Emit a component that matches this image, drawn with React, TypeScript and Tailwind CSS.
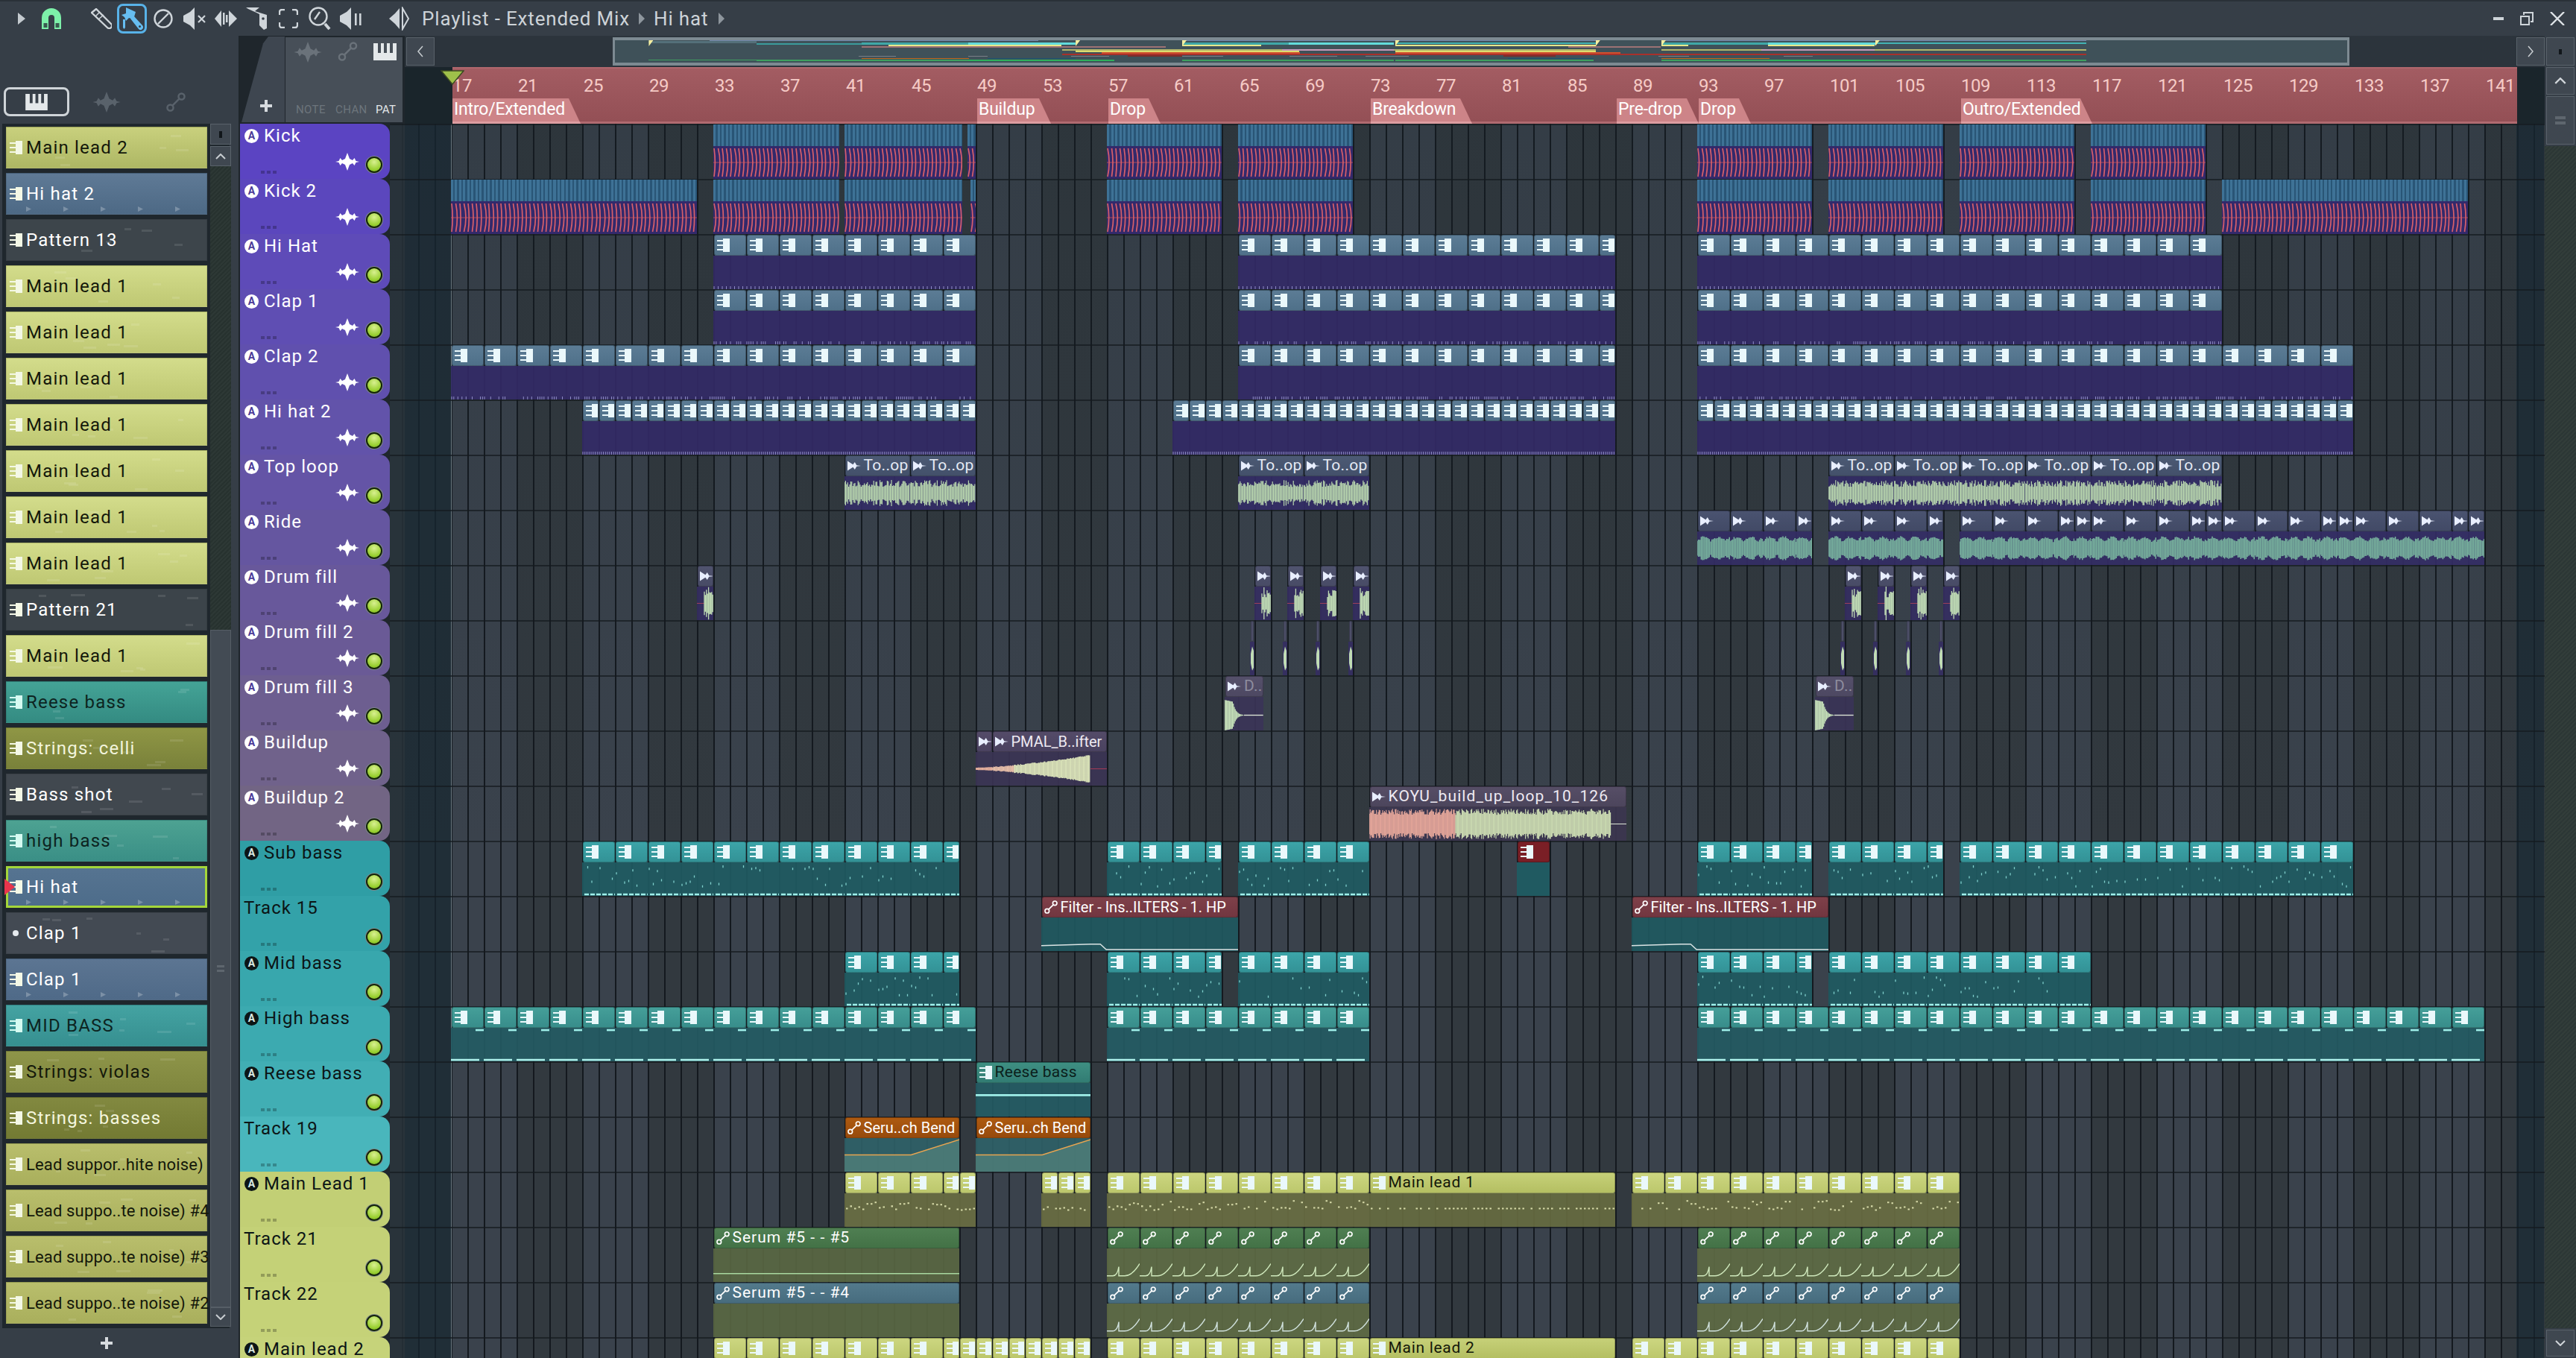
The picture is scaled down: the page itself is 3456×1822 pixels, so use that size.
import React from 'react';

const BAR = 22;
const ORIGIN = 82; // canvas x of bar 17

// small seeded random so the waveforms stay the same each render
function rng(seed: number) {
  let s = seed * 9301 + 49297;
  return () => {
    s = (s * 9301 + 49297) % 233280;
    return s / 233280;
  };
}

function PatIcon({ className = 'text-[#eaf8fb]' }: { className?: string }) {
  return (
    <svg viewBox="0 0 18 18" className={`w-[18px] h-[18px] shrink-0 ${className}`}>
      <path fill="currentColor" d="M9 0H18V18H9V16H1V14H9V10H1V8H9V4H1V2H9Z" />
    </svg>
  );
}

function AudioIcon({ className = 'text-[#e8eeff]' }: { className?: string }) {
  return (
    <svg viewBox="0 0 22 16" className={`w-[18px] h-[14px] shrink-0 ${className}`}>
      <path fill="currentColor" d="M0 0L9 6L12 2L15 7L22 8L15 9L12 14L9 10L0 16Z" />
    </svg>
  );
}

function AutoIcon({ color = 'white', className = 'w-[18px] h-[18px]' }: { color?: string; className?: string }) {
  return (
    <svg viewBox="0 0 18 18" className={`shrink-0 ${className}`} fill="none" stroke={color} strokeWidth="1.7">
      <circle cx="3.8" cy="14.2" r="2.8" />
      <circle cx="14.2" cy="3.8" r="2.8" />
      <path d="M5.8 12.2L12.2 5.8" />
    </svg>
  );
}

function WaveIcon({ color = 'white', className = 'w-[32px] h-[24px]' }: { color?: string; className?: string }) {
  return (
    <svg viewBox="0 0 32 24" className={`shrink-0 ${className}`}>
      <path fill={color} d="M16 0L19 8L23 10L25.500 7L27.500 11L32 12L27.500 13L25.500 17L23 14L19 16L16 24L13 16L9 14L6.500 17L4.500 13L0 12L4.500 11L6.500 7L9 10L13 8Z" />
    </svg>
  );
}

function PianoIcon({ bg = '#e4e8ea', keys = '#39414a', className = 'w-[31px] h-[23px]' }: { bg?: string; keys?: string; className?: string }) {
  return (
    <svg viewBox="0 0 31 23" className={`shrink-0 ${className}`}>
      <rect width="31" height="23" fill={bg} />
      <rect x="6" y="0" width="4" height="13" fill={keys} />
      <rect x="14" y="0" width="4" height="13" fill={keys} />
      <rect x="22" y="0" width="4" height="13" fill={keys} />
    </svg>
  );
}

function Led() {
  return (
    <div className="w-[24px] h-[24px] rounded-full bg-[#7e878a] p-[1px]">
      <div className="w-full h-full rounded-full bg-[#14240a] p-[2px]">
        <div className="w-full h-full rounded-full bg-[radial-gradient(circle_at_50%_30%,#d8f090,#9ad032_65%,#6da51c)]" />
      </div>
    </div>
  );
}

function ToolIcons() {
  const c = '#cfd5da';
  return (
    <div className="flex items-center h-[48px] pl-[24px] shrink-0">
      <svg viewBox="0 0 10 16" className="w-[10px] h-[16px]"><path fill="#c4cacf" d="M0 0L10 8L0 16Z" /></svg>
      <svg viewBox="0 0 26 28" className="w-[26px] h-[28px] ml-[22px]">
        <path fill="#7df0a9" d="M0 28V13A13 13 0 0 1 26 13V28H17V13A4 4 0 0 0 9 13V28Z" />
        <rect x="2.500" y="20" width="5" height="6" fill="#3a5a50" />
        <rect x="18.500" y="20" width="5" height="6" fill="#3a5a50" />
      </svg>
      <svg viewBox="0 0 28 28" className="w-[28px] h-[28px] ml-[40px]" fill="none" stroke={c} strokeWidth="2.400">
        <path d="M1 6L7 1L27 21A3.500 3.500 0 0 1 22 26L2 7Z" />
        <path d="M6 11L12 5M10 15L17 9" strokeWidth="1.500" />
      </svg>
      <div className="w-[40px] h-[40px] ml-[7px] rounded-[8px] border-[3px] border-[#58b2e8] flex items-center justify-center">
        <svg viewBox="0 0 30 32" className="w-[30px] h-[32px]">
          <path fill="#66bdf0" d="M7 1L20 7L17 17L11 15L7 19L5 14L1 11L7 9Z" />
          <path fill="#66bdf0" d="M13 16L18 13L29 25A3.500 3.500 0 0 1 24 30Z" />
          <circle cx="25.500" cy="26.500" r="1.500" fill="#343c45" />
          <path fill="#66bdf0" d="M3 17H6V28L4.500 30L3 28Z" />
        </svg>
      </div>
      <svg viewBox="0 0 26 26" className="w-[26px] h-[26px] ml-[9px]" fill="none" stroke={c} strokeWidth="2.400">
        <circle cx="13" cy="13" r="11.500" />
        <path d="M6 20L20 6" />
      </svg>
      <svg viewBox="0 0 30 30" className="w-[30px] h-[30px] ml-[14px]">
        <path fill={c} d="M0 11L9 6L15 0V30L9 24L0 19Z" />
        <path stroke={c} strokeWidth="2.200" d="M20 11L29 20M29 11L20 20" />
      </svg>
      <svg viewBox="0 0 30 26" className="w-[30px] h-[26px] ml-[12px]">
        <path fill={c} d="M0 13L9 2V24Z" />
        <path fill={c} d="M30 13L19 2V24Z" />
        <rect x="11" y="5" width="2.500" height="16" fill={c} />
        <rect x="15" y="8" width="2.500" height="10" fill={c} />
      </svg>
      <svg viewBox="0 0 30 30" className="w-[30px] h-[30px] ml-[12px]">
        <path fill={c} d="M0 0H18L12 5L28 10V28L24 30L18 24V9L14 7L3 2Z" />
        <circle cx="23" cy="15" r="1.800" fill="#343c45" />
      </svg>
      <svg viewBox="0 0 26 26" className="w-[26px] h-[26px] ml-[14px]" fill="none" stroke={c} strokeWidth="2.400">
        <path d="M8 1H4A3 3 0 0 0 1 4V8M18 1H22A3 3 0 0 1 25 4V8M8 25H4A3 3 0 0 1 1 22V18M18 25H22A3 3 0 0 0 25 22V18" />
      </svg>
      <svg viewBox="0 0 30 32" className="w-[30px] h-[32px] ml-[14px]" fill="none" stroke={c} strokeWidth="2.400">
        <circle cx="13" cy="13" r="11.500" />
        <path d="M8 17L15 7" />
        <path d="M22 23L28 30" strokeWidth="4" />
      </svg>
      <svg viewBox="0 0 30 30" className="w-[30px] h-[30px] ml-[12px]">
        <path fill={c} d="M0 11L9 6L15 0V30L9 24L0 19Z" />
        <rect x="20" y="8" width="2.600" height="16" fill={c} />
        <rect x="26" y="8" width="2.600" height="16" fill={c} />
      </svg>
      <svg viewBox="0 0 30 32" className="w-[30px] h-[32px] ml-[36px]">
        <path fill={c} d="M0 16L8 9L14 2V30L8 23Z" />
        <path fill="none" stroke={c} strokeWidth="2" d="M18 2V30L26 16Z" />
      </svg>
    </div>
  );
}

function TitleBar() {
  return (
    <div className="flex items-center h-[48px] shrink-0 bg-[#363e47] border-t-2 border-[#2a3138]">
      <ToolIcons />
      <div className="ml-[14px] flex items-center text-[#cdd3d8] text-[26px] tracking-[0.85px] whitespace-nowrap">
        <span>Playlist - Extended Mix</span>
        <svg viewBox="0 0 8 16" className="w-[8px] h-[18px] mx-[12px]"><path fill="#8e969d" d="M0 0L8 8L0 16Z" /></svg>
        <span>Hi hat</span>
        <svg viewBox="0 0 8 16" className="w-[8px] h-[18px] ml-[14px]"><path fill="#8e969d" d="M0 0L8 8L0 16Z" /></svg>
      </div>
      <div className="ml-auto flex items-center gap-[22px] pr-[15px]">
        <div className="w-[14px] h-[4px] bg-[#ced4d9]" />
        <svg viewBox="0 0 18 18" className="w-[18px] h-[18px]" fill="none" stroke="#ced4d9" strokeWidth="2">
          <rect x="1" y="6" width="11" height="11" />
          <path d="M5 4V1H17V13H14" />
        </svg>
        <svg viewBox="0 0 20 18" className="w-[20px] h-[18px]" fill="none" stroke="#dde2e6" strokeWidth="2.400">
          <path d="M1 0L19 18M19 0L1 18" />
        </svg>
      </div>
    </div>
  );
}

type SideItem = { name: string; box: string; text: string; icon?: string };

const L1 = { box: 'bg-[linear-gradient(#d3dc8b,#bfc873)]', text: 'text-[#14180a]' };
const LS = { box: 'bg-[linear-gradient(#b9be6c,#a9af5c)]', text: 'text-[#14180a]' };
const SIDE: SideItem[] = [
  { name: 'Main lead 2', box: 'bg-[linear-gradient(#c9d07d,#aeb764)]', text: 'text-[#14180a]' },
  { name: 'Hi hat 2', box: 'bg-[linear-gradient(#5f7a96,#4d6985)]', text: 'text-white' },
  { name: 'Pattern 13', box: 'bg-[#3d454b]', text: 'text-white' },
  { name: 'Main lead 1', ...L1 },
  { name: 'Main lead 1', ...L1 },
  { name: 'Main lead 1', ...L1 },
  { name: 'Main lead 1', ...L1 },
  { name: 'Main lead 1', ...L1 },
  { name: 'Main lead 1', ...L1 },
  { name: 'Main lead 1', ...L1 },
  { name: 'Pattern 21', box: 'bg-[#3c444a]', text: 'text-white' },
  { name: 'Main lead 1', ...L1 },
  { name: 'Reese bass', box: 'bg-[linear-gradient(#44a396,#348b82)]', text: 'text-[#0d2421]' },
  { name: 'Strings: celli', box: 'bg-[linear-gradient(#8f9645,#79813a)]', text: 'text-[#f2f4dc]' },
  { name: 'Bass shot', box: 'bg-[#41484f]', text: 'text-white' },
  { name: 'high bass', box: 'bg-[linear-gradient(#4da292,#3a8f86)]', text: 'text-[#0d2421]' },
  { name: 'Hi hat', box: 'bg-[linear-gradient(#567491,#4d6c8a)] outline-[3px] outline-[#a4d63a] -outline-offset-[3px]', text: 'text-white' },
  { name: 'Clap 1', box: 'bg-[#434a53]', text: 'text-white', icon: 'dot' },
  { name: 'Clap 1', box: 'bg-[linear-gradient(#5c7592,#4f6a88)]', text: 'text-white' },
  { name: 'MID BASS', box: 'bg-[linear-gradient(#44a3a2,#368f90)]', text: 'text-[#0d2421]' },
  { name: 'Strings: violas', box: 'bg-[linear-gradient(#8e9549,#7f863e)]', text: 'text-[#14180a]' },
  { name: 'Strings: basses', box: 'bg-[linear-gradient(#828940,#737a33)]', text: 'text-[#f4f6de]' },
  { name: 'Lead suppor..hite noise)', ...LS },
  { name: 'Lead suppo..te noise) #4', ...LS },
  { name: 'Lead suppo..te noise) #3', ...LS },
  { name: 'Lead suppo..te noise) #2', ...LS },
];

// faint preview notes behind a pattern's name
function SideMarks({ it, seed }: { it: SideItem; seed: number }) {
  const r = rng(seed);
  const blue = it.name.startsWith('Hi hat') || (it.name === 'Clap 1' && it.icon !== 'dot');
  const marks = Array.from({ length: blue ? 5 : 6 }, (_, i) => ({
    left: blue ? 26 + i * 50 : 40 + r() * 210,
    top: blue ? 44 : 6 + r() * 44,
    width: blue ? 7 : 6 + r() * 14,
  }));
  return (
    <>
      {marks.map((m, i) => (
        <div
          key={i}
          className={blue ? 'absolute h-[7px] bg-white/25 [clip-path:polygon(0_0,100%_50%,0_100%)]' : 'absolute h-[3px] bg-white/10'}
          style={{ left: m.left, top: m.top, width: m.width }}
        />
      ))}
    </>
  );
}

function Sidebar() {
  return (
    <div className="w-[322px] shrink-0 flex flex-col bg-[#363e47] border-r-2 border-[#1e252a]">
      <div className="h-[118px] shrink-0 flex items-end pb-[10px] pl-[5px]">
        <div className="w-[88px] h-[39px] rounded-[8px] border-[3px] border-[#cfd4d8] flex items-center justify-center">
          <PianoIcon className="w-[32px] h-[22px]" />
        </div>
        <WaveIcon color="#59626b" className="w-[42px] h-[28px] ml-[29px] mb-[5px]" />
        <AutoIcon color="#59626b" className="w-[32px] h-[26px] ml-[56px] mb-[6px]" />
      </div>
      <div className="flex h-[1616px] shrink-0 ml-[3px] mr-[12px] bg-[#1f272d]">
        <div className="w-[279px] shrink-0 flex flex-col gap-[6px] pl-[5px] pr-[4px] pt-[4px]">
          {SIDE.map((it, i) => (
            <div key={i} className={`relative h-[56px] shrink-0 flex items-center pl-[3px] ${it.box} border border-black/10`}>
              <SideMarks it={it} seed={i + 5} />
              {it.icon === 'dot'
                ? <div className="w-[18px] flex justify-center"><div className="w-[8px] h-[8px] rounded-full bg-[#e6eaee]" /></div>
                : <PatIcon className={`relative ${it.text.includes('0d2421') ? 'text-[#d6fbf2]' : 'text-[#f4f8e6]'}`} />}
              <span className={`relative ml-[5px] whitespace-nowrap ${it.text} ${it.name.startsWith('Lead') ? 'text-[22px] tracking-[0.15px]' : 'text-[24px] tracking-[1.2px]'}`}>
                {it.name}
              </span>
              {it.name === 'Hi hat' && (
                <div className="absolute left-[-3px] top-[16px] w-[14px] h-[22px] bg-[#e8344c] [clip-path:polygon(0_0,100%_50%,0_100%)]" />
              )}
            </div>
          ))}
        </div>
        <div className="w-[28px] shrink-0 flex flex-col">
          <div className="h-[28px] bg-[#3f4750] border border-[#59626a] flex items-center justify-center">
            <div className="w-[4px] h-[9px] bg-[#11161a]" />
          </div>
          <div className="h-[27px] mt-[2px] bg-[#3f4750] border border-[#59626a] flex items-center justify-center">
            <svg viewBox="0 0 14 8" className="w-[16px] h-[8px]" fill="none" stroke="#c8cdd1" strokeWidth="2"><path d="M1 7L7 1L13 7" /></svg>
          </div>
          <div className="h-[622px] bg-[repeating-linear-gradient(135deg,#27322f_0_2px,#2d3835_2px_4px)]" />
          <div className="h-[909px] bg-[#434b54] border border-[#565e66] flex items-center justify-center">
            <div className="flex flex-col gap-[3px]">
              <div className="w-[10px] h-[3px] bg-[#5e666e]" />
              <div className="w-[10px] h-[3px] bg-[#5e666e]" />
            </div>
          </div>
          <div className="h-[26px] bg-[#3f4750] border border-[#565e66] flex items-center justify-center">
            <svg viewBox="0 0 14 8" className="w-[14px] h-[8px]" fill="none" stroke="#c8cdd1" strokeWidth="2"><path d="M1 1L7 7L13 1" /></svg>
          </div>
        </div>
      </div>
      <div className="flex-1 flex items-center justify-center pr-[34px]">
        <PlusIcon />
      </div>
    </div>
  );
}

function PlusIcon() {
  return (
    <svg viewBox="0 0 16 16" className="w-[16px] h-[16px]"><path fill="#d6dade" d="M6 0H10V6H16V10H10V16H6V10H0V6H6Z" /></svg>
  );
}

type Track = { name: string; bg: string; auto: boolean; wave: boolean; tone: 'p' | 't' | 'y' };

const TRACKS: Track[] = [
  { name: 'Kick', bg: 'bg-[#5b44c2]', auto: true, wave: true, tone: 'p' },
  { name: 'Kick 2', bg: 'bg-[#5b47bd]', auto: true, wave: true, tone: 'p' },
  { name: 'Hi Hat', bg: 'bg-[#5e4bb8]', auto: true, wave: true, tone: 'p' },
  { name: 'Clap 1', bg: 'bg-[#5f4eb3]', auto: true, wave: true, tone: 'p' },
  { name: 'Clap 2', bg: 'bg-[#6050ae]', auto: true, wave: true, tone: 'p' },
  { name: 'Hi hat 2', bg: 'bg-[#6253aa]', auto: true, wave: true, tone: 'p' },
  { name: 'Top loop', bg: 'bg-[#6454a6]', auto: true, wave: true, tone: 'p' },
  { name: 'Ride', bg: 'bg-[#6556a0]', auto: true, wave: true, tone: 'p' },
  { name: 'Drum fill', bg: 'bg-[#68589b]', auto: true, wave: true, tone: 'p' },
  { name: 'Drum fill 2', bg: 'bg-[#6a5a96]', auto: true, wave: true, tone: 'p' },
  { name: 'Drum fill 3', bg: 'bg-[#6d5e90]', auto: true, wave: true, tone: 'p' },
  { name: 'Buildup', bg: 'bg-[#70628b]', auto: true, wave: true, tone: 'p' },
  { name: 'Buildup 2', bg: 'bg-[#726584]', auto: true, wave: true, tone: 'p' },
  { name: 'Sub bass', bg: 'bg-[#2f9ea5]', auto: true, wave: false, tone: 't' },
  { name: 'Track 15', bg: 'bg-[#33a2a9]', auto: false, wave: false, tone: 't' },
  { name: 'Mid bass', bg: 'bg-[#38a7ad]', auto: true, wave: false, tone: 't' },
  { name: 'High bass', bg: 'bg-[#3caab0]', auto: true, wave: false, tone: 't' },
  { name: 'Reese bass', bg: 'bg-[#41aeb4]', auto: true, wave: false, tone: 't' },
  { name: 'Track 19', bg: 'bg-[#49b6bc]', auto: false, wave: false, tone: 't' },
  { name: 'Main Lead 1', bg: 'bg-[#c2cf75]', auto: true, wave: false, tone: 'y' },
  { name: 'Track 21', bg: 'bg-[#c4d177]', auto: false, wave: false, tone: 'y' },
  { name: 'Track 22', bg: 'bg-[#c5d278]', auto: false, wave: false, tone: 'y' },
  { name: 'Main lead 2', bg: 'bg-[#c6d37a]', auto: true, wave: false, tone: 'y' },
];

function TrackLabel({ t }: { t: Track }) {
  const dark = t.tone !== 'p';
  return (
    <div className={`relative h-[74px] shrink-0 rounded-r-[14px] ${t.bg} ${dark ? 'text-[#0c1516]' : 'text-white'}`}>
      <div className="flex items-center h-[32px] pl-[5px]">
        {t.auto && (
          <div className={`w-[19px] h-[19px] rounded-full flex items-center justify-center text-[14px] font-bold leading-none mr-[7px] ml-[1px] ${dark ? 'bg-[#0c1516] text-[#d8e8e0]' : 'bg-white text-[#4a3a98]'}`}>
            A
          </div>
        )}
        <span className="text-[24px] tracking-[1px] whitespace-nowrap">{t.name}</span>
      </div>
      <div className="absolute left-[28px] bottom-[7px] flex gap-[3px]">
        {[0, 1, 2].map(i => <div key={i} className="w-[5px] h-[4px] bg-black/25" />)}
      </div>
      {t.wave && <WaveIcon className="absolute left-[128px] top-[39px] w-[32px] h-[24px]" />}
      <div className="absolute right-[9px] top-[43px]"><Led /></div>
    </div>
  );
}

type Kind = 'kick' | 'kick2' | 'hat' | 'clap' | 'clap2' | 'hat2' | 'top' | 'ride' | 'fill' | 'fill2' | 'd' | 'build' | 'koyu'
  | 'sub' | 'red' | 'filter' | 'high' | 'reese' | 'seru' | 'lead' | 'long' | 'a21' | 'f21' | 'a22' | 'f22';

type ClipData = { from: number; to: number; kind: Kind; label?: string };

function seq(from: number, to: number, step: number, kind: Kind, label?: string): ClipData[] {
  const out: ClipData[] = [];
  for (let b = from; b < to; b += step) out.push({ from: b, to: Math.min(b + step, to), kind, label });
  return out;
}

const one = (from: number, to: number, kind: Kind, label?: string): ClipData[] => [{ from, to, kind, label }];

const hatRuns = (kind: Kind) => [...seq(33, 49, 2, kind), ...seq(65, 88, 2, kind), ...seq(93, 125, 2, kind)];
const kickMid = (kind: Kind) => [
  ...one(57, 64, kind), ...one(65, 72, kind), ...one(93, 100, kind), ...one(101, 108, kind), ...one(109, 116, kind), ...one(117, 124, kind),
];

const rideStarts = [109, 111, 113, 115, 116, 117, 119, 121, 123, 124, 125, 127, 129, 131, 132, 133, 135, 137, 139, 140, 141];
const bassRuns = (kind: Kind) => [...seq(57, 64, 2, kind), ...seq(65, 73, 2, kind), ...seq(93, 100, 2, kind)];

const LANES: ClipData[][] = [
  [...one(33, 40.7, 'kick'), ...one(41, 48.2, 'kick'), ...one(48.5, 49, 'kick'), ...kickMid('kick')],
  [...one(17, 32, 'kick2'), ...one(33, 40.7, 'kick2'), ...one(41, 48.2, 'kick2'), ...one(48.7, 49, 'kick2'), ...kickMid('kick2'), ...one(125, 140, 'kick2')],
  hatRuns('hat'),
  hatRuns('clap'),
  [...seq(17, 49, 2, 'clap2'), ...seq(65, 88, 2, 'clap2'), ...seq(93, 133, 2, 'clap2')],
  [...seq(25, 49, 1, 'hat2'), ...seq(61, 88, 1, 'hat2'), ...seq(93, 133, 1, 'hat2')],
  [...seq(41, 49, 4, 'top', 'To..op'), ...seq(65, 73, 4, 'top', 'To..op'), ...seq(101, 125, 4, 'top', 'To..op')],
  [
    ...seq(93, 100, 2, 'ride'), ...seq(101, 108, 2, 'ride'),
    ...rideStarts.slice(0, -1).map((b, i) => ({ from: b, to: rideStarts[i + 1], kind: 'ride' as Kind })),
  ],
  [32, 66, 68, 70, 72, 102, 104, 106, 108].map(b => ({ from: b, to: b + 1, kind: 'fill' as Kind })),
  [65.73, 67.73, 69.73, 71.73, 101.73, 103.73, 105.73, 107.73].map(b => ({ from: b, to: b + 0.27, kind: 'fill2' as Kind })),
  [...one(64.2, 66.55, 'd', 'D..'), ...one(100.2, 102.55, 'd', 'D..')],
  [...one(49, 50, 'build'), ...one(50, 57, 'build', 'PMAL_B..ifter')],
  one(73, 88.7, 'koyu', 'KOYU_build_up_loop_10_126'),
  [...seq(25, 48, 2, 'sub'), ...bassRuns('sub'), ...seq(101, 108, 2, 'sub'), ...seq(109, 133, 2, 'sub'), ...one(82, 84, 'red')],
  [...one(53, 65, 'filter', 'Filter - Ins..ILTERS - 1. HP'), ...one(89, 101, 'filter', 'Filter - Ins..ILTERS - 1. HP')],
  [...seq(41, 48, 2, 'sub'), ...bassRuns('sub'), ...seq(101, 117, 2, 'sub')],
  [...seq(17, 49, 2, 'high'), ...seq(57, 73, 2, 'high'), ...seq(93, 141, 2, 'high')],
  one(49, 56, 'reese', 'Reese bass'),
  [...one(41, 48, 'seru', 'Seru..ch Bend'), ...one(49, 56, 'seru', 'Seru..ch Bend')],
  [
    ...seq(41, 47, 2, 'lead'), ...seq(47, 49, 1, 'lead'), ...seq(53, 56, 1, 'lead'), ...seq(57, 73, 2, 'lead'),
    ...one(73, 88, 'long', 'Main lead 1'), ...seq(89, 93, 2, 'lead'), ...seq(93, 109, 2, 'lead'),
  ],
  [...one(33, 48, 'f21', 'Serum #5 - - #5'), ...seq(57, 73, 2, 'a21'), ...seq(93, 109, 2, 'a21')],
  [...one(33, 48, 'f22', 'Serum #5 - - #4'), ...seq(57, 73, 2, 'a22'), ...seq(93, 109, 2, 'a22')],
  [
    ...seq(33, 47, 2, 'lead'), ...seq(47, 56, 1, 'lead'), ...seq(57, 73, 2, 'lead'),
    ...one(73, 88, 'long', 'Main lead 2'), ...seq(89, 93, 2, 'lead'), ...seq(93, 109, 2, 'lead'),
  ],
];

const HEAD_LABEL = 'bg-[linear-gradient(#5c7c95,#4f7089)]';
const STYLE: Record<Kind, { head: string; body: string; text: string; icon: 'pat' | 'audio' | 'auto' | 'none'; size?: string }> = {
  kick: { head: '', body: 'bg-[#33296b]', text: '', icon: 'none' },
  kick2: { head: '', body: 'bg-[#33296b]', text: '', icon: 'none' },
  hat: { head: HEAD_LABEL, body: 'bg-[#332a67]/90', text: 'text-white', icon: 'pat' },
  clap: { head: HEAD_LABEL, body: 'bg-[#332a67]/90', text: 'text-white', icon: 'pat' },
  clap2: { head: HEAD_LABEL, body: 'bg-[#332a67]/90', text: 'text-white', icon: 'pat' },
  hat2: { head: HEAD_LABEL, body: 'bg-[#332a67]/90', text: 'text-white', icon: 'pat' },
  top: { head: 'bg-[linear-gradient(#4c5a74,#43506a)]', body: 'bg-[#332c66]/90', text: 'text-[#e4e9f4]', icon: 'audio' },
  ride: { head: 'bg-[linear-gradient(#4a5370,#424a66)]', body: 'bg-[#342d66]/90', text: 'text-white', icon: 'audio' },
  fill: { head: 'bg-[linear-gradient(#50536e,#484b66)]', body: 'bg-[#352e62]/90', text: 'text-white', icon: 'audio' },
  fill2: { head: 'bg-[#4d4f68]', body: 'bg-[#352e62]/90', text: 'text-white', icon: 'none' },
  d: { head: 'bg-[linear-gradient(#55506a,#4d4862)]', body: 'bg-[#3b3458]/90', text: 'text-[#8d8c9e]', icon: 'audio' },
  build: { head: 'bg-[linear-gradient(#544b68,#4a4260)]', body: 'bg-[#3b3454]/90', text: 'text-[#eeeaf2]', icon: 'audio', size: 'text-[20px]' },
  koyu: { head: 'bg-[linear-gradient(#564e66,#4c455c)]', body: 'bg-[#3c3650]/90', text: 'text-[#eeeaf2]', icon: 'audio', size: 'text-[21px] tracking-[1.1px]' },
  sub: { head: 'bg-[linear-gradient(#3ca4a8,#339296)]', body: 'bg-[#1f5c63]/90', text: 'text-black', icon: 'pat' },
  red: { head: 'bg-[#7a1f26]', body: 'bg-[#205a61]', text: 'text-white', icon: 'pat' },
  filter: { head: 'bg-[linear-gradient(#7f4049,#723640)]', body: 'bg-[#1f5a60]/90', text: 'text-white', icon: 'auto', size: 'text-[20px]' },
  high: { head: 'bg-[linear-gradient(#459f99,#388d8b)]', body: 'bg-[#235c64]/90', text: 'text-black', icon: 'pat' },
  reese: { head: 'bg-[linear-gradient(#3e8f82,#327c73)]', body: 'bg-[#235c64]/90', text: 'text-[#0b1f1c]', icon: 'pat' },
  seru: { head: 'bg-[linear-gradient(#ad5a10,#974a0c)]', body: 'bg-[#2f6268]/90', text: 'text-white', icon: 'auto', size: 'text-[20px] -ml-[1px]' },
  lead: { head: 'bg-[linear-gradient(#ccd680,#bcc76c)]', body: 'bg-[#6a6f42]/90', text: 'text-black', icon: 'pat' },
  long: { head: 'bg-[linear-gradient(#c6d078,#b4bf62)]', body: 'bg-[#676d40]/90', text: 'text-[#14180a]', icon: 'pat', size: 'text-[21px] tracking-[0.7px]' },
  a21: { head: 'bg-[linear-gradient(#4f7f52,#437246)]', body: 'bg-[#5f6d45]/90', text: 'text-white', icon: 'auto' },
  f21: { head: 'bg-[linear-gradient(#4f7f52,#437246)]', body: 'bg-[#5a6843]/90', text: 'text-white', icon: 'auto', size: 'text-[21px] tracking-[1px]' },
  a22: { head: 'bg-[linear-gradient(#537a8c,#476c7e)]', body: 'bg-[#5f6d45]/90', text: 'text-white', icon: 'auto' },
  f22: { head: 'bg-[linear-gradient(#537a8c,#476c7e)]', body: 'bg-[#5a6843]/90', text: 'text-white', icon: 'auto', size: 'text-[21px] tracking-[1px]' },
};

function waveLines(w: number, step: number, amp: (x: number, r: number) => number, seed: number, cy = 22, start = 0) {
  const r = rng(seed);
  let d = '';
  for (let x = 0; x < w; x += step) {
    const a = amp(x, r());
    d += `M${(x + start).toFixed(1)} ${(cy - a).toFixed(1)}V${(cy + a).toFixed(1)}`;
  }
  return d;
}

function ClipBody({ clip, w, seed }: { clip: ClipData; w: number; seed: number }) {
  const k = clip.kind;
  let inner: React.ReactNode = null;

  if (k === 'kick' || k === 'kick2') {
    let d = '';
    const r = rng(seed);
    for (let x = 1; x < w; x += 5.5) {
      const o = 2 + r() * 3;
      d += `M${x.toFixed(1)} 3Q${(x + o).toFixed(1)} 22 ${x.toFixed(1)} 41`;
    }
    inner = (
      <>
        <path d={`M0 22H${w}`} stroke="#b04a5c" strokeWidth="1" />
        <path d={d} fill="none" stroke="#d65f6a" strokeWidth="1.700" />
      </>
    );
  } else if (k === 'hat' || k === 'clap' || k === 'clap2' || k === 'hat2') {
    const r = rng(seed);
    let d = '';
    const step = k === 'hat' ? 5.5 : 2.75;
    for (let x = 1; x < w; x += step) {
      if (k === 'hat' || k === 'hat2' || r() > 0.55) d += `M${x.toFixed(1)} 40V44`;
    }
    inner = <path d={d} stroke="#8d8ac4" strokeWidth="1" />;
  } else if (k === 'top') {
    inner = <path d={waveLines(w, 1.4, (_x, n) => 8 + n * 9, seed)} stroke="#b8d6ae" strokeWidth="1.200" />;
  } else if (k === 'ride') {
    inner = <path d={waveLines(w, 1.8, (x, n) => 8 + 5 * Math.abs(Math.sin(x / 6)) + n * 3, seed)} stroke="#7bb8a0" strokeWidth="1.500" />;
  } else if (k === 'fill') {
    inner = (
      <>
        <path d="M0 22H10" stroke="#9c3f58" />
        <path d={waveLines(12, 1.4, (x, n) => (x < 6 ? 8 + n * 14 : 17 - x * 0.5 + n * 5), seed, 22, 10)} stroke="#c0dcb4" strokeWidth="1.300" />
      </>
    );
  } else if (k === 'fill2') {
    inner = <path d="M3 6L5 12V34L3 38L1 28V16Z" fill="#c0dcb4" />;
  } else if (k === 'd') {
    inner = (
      <>
        <path d={waveLines(26, 1.3, x => (x < 11 ? 20 - x * 0.2 : Math.max(0.6, 18 * Math.exp(-(x - 11) / 4))), seed, 24)} stroke="#c4dfb8" strokeWidth="1.200" />
        <path d={`M26 24H${w}`} stroke="#dfe8d8" strokeWidth="1.300" />
      </>
    );
  } else if (k === 'build') {
    const env = (x: number) => (x / 154) ** 1.5 * 16 + 1;
    if (clip.label) {
      inner = (
        <>
          <path d={`M${w - 22} 22H${w}`} stroke="#a53a55" />
          <path d={waveLines(30, 1.2, (x, n) => env(x + 22) + n, seed)} stroke="#eec4ac" strokeWidth="1.100" />
          <path d={waveLines(w - 52, 1.2, (x, n) => env(x + 52) + n * 1.5, seed + 1, 22, 30)} stroke="#dfe8bc" strokeWidth="1.100" />
        </>
      );
    } else {
      inner = <path d={waveLines(w, 1.2, x => env(x) + 0.5, seed)} stroke="#eeb6a0" strokeWidth="1.100" />;
    }
  } else if (k === 'koyu') {
    const split = 116;
    inner = (
      <>
        <path d={waveLines(split, 1.2, (_x, n) => 12 + n * 8, seed)} stroke="#e9a99c" strokeWidth="1.100" />
        <path d={waveLines(208, 1.2, (_x, n) => 12 + n * 8, seed + 1, 22, split)} stroke="#cfdfb4" strokeWidth="1.100" />
        <path d={`M${split + 208} 22H${w}`} stroke="#dfe8d8" />
      </>
    );
  } else if (k === 'sub') {
    const r = rng(seed);
    let d = '';
    let e = '';
    for (let x = 3; x < w; x += 8) {
      d += `M${x} 42H${x + 6}`;
    }
    for (let x = 2; x < w; x += 5.5) {
      if (r() > 0.45) e += `M${x.toFixed(1)} ${(4 + r() * 26).toFixed(0)}v3`;
    }
    inner = (
      <>
        <path d={d} stroke="#9fefe9" strokeWidth="2.500" />
        <path d={e} stroke="#7fcfcc" strokeWidth="1.300" />
      </>
    );
  } else if (k === 'filter') {
    inner = <path d={`M0 37L${w * 0.25} 35L${w * 0.3} 35L${w * 0.33} 42H${w}`} fill="none" stroke="#dbe4e4" strokeWidth="1.400" />;
  } else if (k === 'high') {
    inner = (
      <>
        <path d={`M${w - 11} 3H${w}`} stroke="#9fefe9" strokeWidth="2.500" />
        <path d={`M0 42H${w - 6}`} stroke="#aef2ec" strokeWidth="2.500" />
      </>
    );
  } else if (k === 'reese') {
    inner = <path d={`M0 16H${w}`} stroke="#9fefe9" strokeWidth="2.500" />;
  } else if (k === 'seru') {
    inner = (
      <>
        <path d={`M0 22H${w * 0.58}L${w} 2V44H0Z`} fill="#5b8a80" opacity="0.6" />
        <path d={`M0 22H${w * 0.58}L${w} 2`} fill="none" stroke="#e8a550" strokeWidth="1.400" />
      </>
    );
  } else if (k === 'lead' || k === 'long') {
    const r = rng(seed);
    let d = '';
    for (let x = 2; x < w; x += 5.5) {
      const y = k === 'long' ? 20 : w > 30 && x > w * 0.6 ? 10 + r() * 5 : 17 + r() * 5;
      if (r() > 0.25) d += `M${x.toFixed(1)} ${y.toFixed(0)}h2.500`;
    }
    inner = <path d={d} stroke="#d6d9a8" strokeWidth="2" />;
  } else if (k === 'a21' || k === 'a22') {
    const c = k === 'a21' ? '#cfe8bc' : '#cfe0dc';
    inner = <path d="M0 36H8Q14 36 16 24V36H24Q34 36 44 20" fill="none" stroke={c} strokeWidth="1.400" />;
  } else if (k === 'f21') {
    inner = <path d={`M0 33H${w}`} stroke="#a8d8a0" strokeWidth="1.600" />;
  }

  return (
    <svg viewBox={`0 0 ${w} 44`} preserveAspectRatio="none" className="absolute inset-0 w-full h-full">
      {inner}
    </svg>
  );
}

function Clip({ clip, seed }: { clip: ClipData; seed: number }) {
  const st = STYLE[clip.kind];
  const w = (clip.to - clip.from) * BAR;
  const isKick = clip.kind === 'kick' || clip.kind === 'kick2';
  return (
    <div className="absolute top-[-1px] h-[73px] flex flex-col" style={{ left: ORIGIN + (clip.from - 17) * BAR, width: w }}>
      {isKick ? (
        <div className="h-[29px] shrink-0 bg-[repeating-linear-gradient(90deg,#3e7296_0_3px,#295576_3px_5.500px)]" />
      ) : (
        <div className={`h-[28px] shrink-0 mx-[0.5px] rounded-[3px] border border-black/25 flex items-center pl-[2px] overflow-hidden ${st.head}`}>
          {st.icon === 'pat' && <PatIcon />}
          {st.icon === 'audio' && <AudioIcon />}
          {st.icon === 'auto' && <AutoIcon />}
          {clip.label && (
            <span className={`ml-[4px] whitespace-nowrap ${st.text} ${st.size ?? 'text-[21px] tracking-[0.3px]'}`}>{clip.label}</span>
          )}
        </div>
      )}
      <div className={`relative flex-1 ${st.body}`}>
        <ClipBody clip={clip} w={w} seed={seed} />
      </div>
    </div>
  );
}

function Canvas() {
  return (
    <div className="relative flex-1 overflow-hidden bg-[linear-gradient(90deg,#14191f_2px,transparent_2px),linear-gradient(90deg,#3a424c_88px,#32393f_88px)] bg-[length:22px_100%,176px_100%] bg-[position:82px_0,82px_0]">
      <div className="absolute inset-0 bg-[linear-gradient(rgba(24,38,44,0.18),rgba(24,38,44,0)_60%)]" />
      <div className="absolute left-0 top-0 bottom-0 w-[20px] bg-[#27323a]/80" />
      <div className="absolute left-[20px] top-0 bottom-0 w-[62px] bg-[#172833]/65" />
      <div className="absolute left-[82px] top-0 bottom-0 w-[1px] bg-[#6c7a82]" />
      <div className="absolute left-[2853px] top-0 bottom-0 w-[37px] bg-[#172833]/65" />
      <div className="relative flex flex-col">
        {LANES.map((clips, i) => (
          <div key={i} className="relative h-[74px] shrink-0 border-t-2 border-[#14191e]/70">
            {clips.map((c, j) => <Clip key={j} clip={c} seed={i * 31 + j + 3} />)}
          </div>
        ))}
      </div>
    </div>
  );
}

const MARKERS = [
  { text: 'Intro/Extended', bar: 17, w: 172 },
  { text: 'Buildup', bar: 49, w: 99 },
  { text: 'Drop', bar: 57, w: 70 },
  { text: 'Breakdown', bar: 73, w: 136 },
  { text: 'Pre-drop', bar: 88, w: 110 },
  { text: 'Drop', bar: 93, w: 70 },
  { text: 'Outro/Extended', bar: 109, w: 176 },
];

const barLabels = Array.from({ length: 32 }, (_, i) => 17 + i * 4);

function Ruler() {
  return (
    <div className="relative w-[2770px] h-full shrink-0 bg-[linear-gradient(#a35c62,#934f55)] border-t-2 border-[#b0676d]">
      <div className="flex h-[43px] items-center pt-[2px]">
        {barLabels.map(b => (
          <div key={b} className="w-[88px] shrink-0 text-[24px] text-[#f6cbc6] tracking-[-0.5px]">{b}</div>
        ))}
      </div>
      <div className="absolute left-0 right-0 bottom-0 h-[3px] bg-[#b06a70]" />
      {MARKERS.map(m => (
        <div
          key={m.text + m.bar}
          className="absolute bottom-0 h-[34px] pl-[2px] bg-[#cd8488] border-b-[3px] border-[#dc9ca0] [clip-path:polygon(0_0,calc(100%-16px)_0,100%_100%,0_100%)] text-white text-[23px] tracking-[-0.2px] leading-[30px] whitespace-nowrap"
          style={{ left: (m.bar - 17) * BAR, width: m.w }}
        >
          {m.text}
        </div>
      ))}
      <svg viewBox="0 0 32 20" className="absolute left-[-16px] top-[2px] w-[32px] h-[20px]">
        <path d="M1 1H31L16 19Z" fill="#9ec04a" stroke="#3c4a22" strokeWidth="1.500" />
      </svg>
    </div>
  );
}

// mini map segments measured along the overview strip: y, height, colour, [x1, x2]...
const MINI: [number, number, string, number[]][] = [
  [0, 1, '#6e85a8', [120, 466, 617, 1052, 1121, 1568]],
  [1, 3, '#54707a', [56, 169]],
  [4, 2, '#3b9c9c', [169, 280]],
  [3, 3, '#3fa8a8', [280, 392, 617, 729, 1121, 1233]],
  [3, 3, '#62dbdb', [392, 505, 729, 840, 1233, 1346]],
  [3, 2, '#42b4b4', [841, 1052, 1346, 1568]],
  [6, 2, '#e8e88a', [308, 392, 392, 490, 617, 700, 841, 1052, 1121, 1149, 1233, 1345]],
  [8, 2, '#9c7274', [280, 505, 505, 600, 1023, 1120]],
  [12, 2, '#b2b56a', [491, 1052, 1121, 1568]],
  [12, 2, '#c89ab8', [722, 840, 1226, 1345]],
  [14, 2, '#dcdc70', [505, 740, 841, 1052]],
  [16, 2, '#d2512e', [532, 741, 841, 1078]],
  [18, 2, '#a8302a', [491, 1568]],
  [20, 2, '#7a2c2a', [560, 617, 955, 1010]],
  [21, 1, '#7a7f86', [277, 316, 392, 412, 500, 540, 617, 660, 730, 780, 810, 855, 1118, 1150, 1250, 1280]],
  [24, 1, '#c06a1a', [280, 393, 1121, 1235]],
  [24, 1, '#1a5570', [412, 505, 960, 1050]],
  [26, 1, '#3fa060', [56, 169]],
  [26, 2, '#3fa060', [169, 280, 280, 392, 617, 840, 841, 1050, 1121, 1568]],
  [26, 2, '#2fb05c', [392, 546, 1233, 1345]],
];

const MINI_TICKS = [56, 505, 617, 841, 1052, 1121, 1346];
const miniX = (v: number) => (v * 2000) / 1568 - 23;

function Overview() {
  return (
    <div className="relative w-[2330px] h-[38px] shrink-0 bg-[#3f5159] border-x-[3px] border-y-[4px] border-[#7d8a92] overflow-hidden">
      {MINI.map(([y, h, color, xs], i) => (
        <React.Fragment key={i}>
          {xs.filter((_, k) => k % 2 === 0).map((x, k) => (
            <div
              key={k}
              className="absolute"
              style={{ left: miniX(x) - 3, width: miniX(xs[k * 2 + 1]) - miniX(x), top: y, height: h, background: color }}
            />
          ))}
        </React.Fragment>
      ))}
      {MINI_TICKS.map(x => (
        <div
          key={x}
          className="absolute top-0 w-[6px] h-[8px] bg-[#f6efa0] [clip-path:polygon(0_0,100%_0,0_100%)]"
          style={{ left: miniX(x) - 3 }}
        />
      ))}
    </div>
  );
}

function SquareBtn({ children, className = '' }: { children: React.ReactNode; className?: string }) {
  return (
    <div className={`bg-[#3f4750] border border-[#59626a] flex items-center justify-center shrink-0 ${className}`}>{children}</div>
  );
}

function PlaylistHead() {
  return (
    <div className="flex h-[118px] shrink-0">
      <div className="w-[60px] shrink-0 pt-[1px] pl-[2px] bg-[#1f262c]">
        <div className="h-[115px] bg-[#3e4650] flex items-end justify-center pb-[14px] pl-[8px] [clip-path:polygon(0_100%,50%_8%,62%_0,100%_0,100%_100%)]">
          <PlusIcon />
        </div>
      </div>
      <div className="w-[161px] shrink-0 pt-[2px] px-[1px] bg-[#1f262c] border-r-2 border-[#1f262c]">
        <div className="relative h-[114px] bg-[#474f58] flex flex-col">
          <div className="flex items-start pt-[6px] pl-[9px]">
            <WaveIcon color="#6a727a" className="w-[42px] h-[28px]" />
            <AutoIcon color="#6a727a" className="w-[33px] h-[26px] ml-[16px]" />
            <PianoIcon className="w-[31px] h-[23px] ml-[18px] mt-[2px]" keys="#474f58" />
          </div>
          <div className="mt-auto mb-[6px] pl-[14px] flex text-[15px] tracking-[0.4px]">
            <span className="w-[53px] text-[#6d757c]">NOTE</span>
            <span className="w-[54px] text-[#6d757c]">CHAN</span>
            <span className="text-[#e2e6e9]">PAT</span>
          </div>
        </div>
      </div>
      <div className="flex-1 flex flex-col min-w-0">
        <div className="h-[42px] flex items-center shrink-0 bg-[#2c343c] pl-[2px]">
          <SquareBtn className="w-[38px] h-[38px]">
            <svg viewBox="0 0 8 16" className="w-[8px] h-[16px]" fill="none" stroke="#c8cdd1" strokeWidth="1.500"><path d="M7 1L1 8L7 15" /></svg>
          </SquareBtn>
          <div className="w-[239px] shrink-0" />
          <Overview />
          <div className="flex-1" />
          <SquareBtn className="w-[38px] h-[38px]">
            <svg viewBox="0 0 8 16" className="w-[8px] h-[16px]" fill="none" stroke="#c8cdd1" strokeWidth="1.500"><path d="M1 1L7 8L1 15" /></svg>
          </SquareBtn>
        </div>
        <div className="h-[76px] flex shrink-0 bg-[#1a252b]">
          <div className="w-[64px] shrink-0" />
          <Ruler />
        </div>
      </div>
    </div>
  );
}

function RightScroll() {
  return (
    <div className="w-[42px] shrink-0 flex flex-col pt-[2px] pl-[2px] pr-[2px] gap-[2px] bg-[#363e47]">
      <SquareBtn className="w-[38px] h-[38px]"><div className="w-[4px] h-[7px] bg-[#11161a]" /></SquareBtn>
      <SquareBtn className="w-[38px] h-[37px]">
        <svg viewBox="0 0 14 8" className="w-[16px] h-[9px]" fill="none" stroke="#d0d5d9" strokeWidth="2"><path d="M1 7L7 1L13 7" /></svg>
      </SquareBtn>
      <SquareBtn className="w-[38px] h-[65px]">
        <div className="flex flex-col gap-[3px]">
          <div className="w-[14px] h-[4px] bg-[#5e666e]" />
          <div className="w-[14px] h-[4px] bg-[#5e666e]" />
        </div>
      </SquareBtn>
      <div className="flex-1 -mx-[2px] bg-[repeating-linear-gradient(135deg,#2c3735_0_2px,#323d3a_2px_4px)]" />
      <SquareBtn className="w-[38px] h-[36px] mb-[2px]">
        <svg viewBox="0 0 14 8" className="w-[14px] h-[8px]" fill="none" stroke="#d0d5d9" strokeWidth="2"><path d="M1 1L7 7L13 1" /></svg>
      </SquareBtn>
    </div>
  );
}

export default function App() {
  return (
    <div className="w-[3456px] h-[1822px] overflow-hidden flex flex-col bg-[#363e47] font-['Roboto',sans-serif]">
      <TitleBar />
      <div className="flex flex-1 min-h-0">
        <Sidebar />
        <div className="flex-1 min-w-0 flex flex-col">
          <PlaylistHead />
          <div className="flex flex-1 min-h-0 bg-[#1f262c]">
            <div className="w-[201px] shrink-0 flex flex-col overflow-hidden">
              {TRACKS.map(t => <TrackLabel key={t.name} t={t} />)}
            </div>
            <Canvas />
          </div>
        </div>
        <RightScroll />
      </div>
    </div>
  );
}
